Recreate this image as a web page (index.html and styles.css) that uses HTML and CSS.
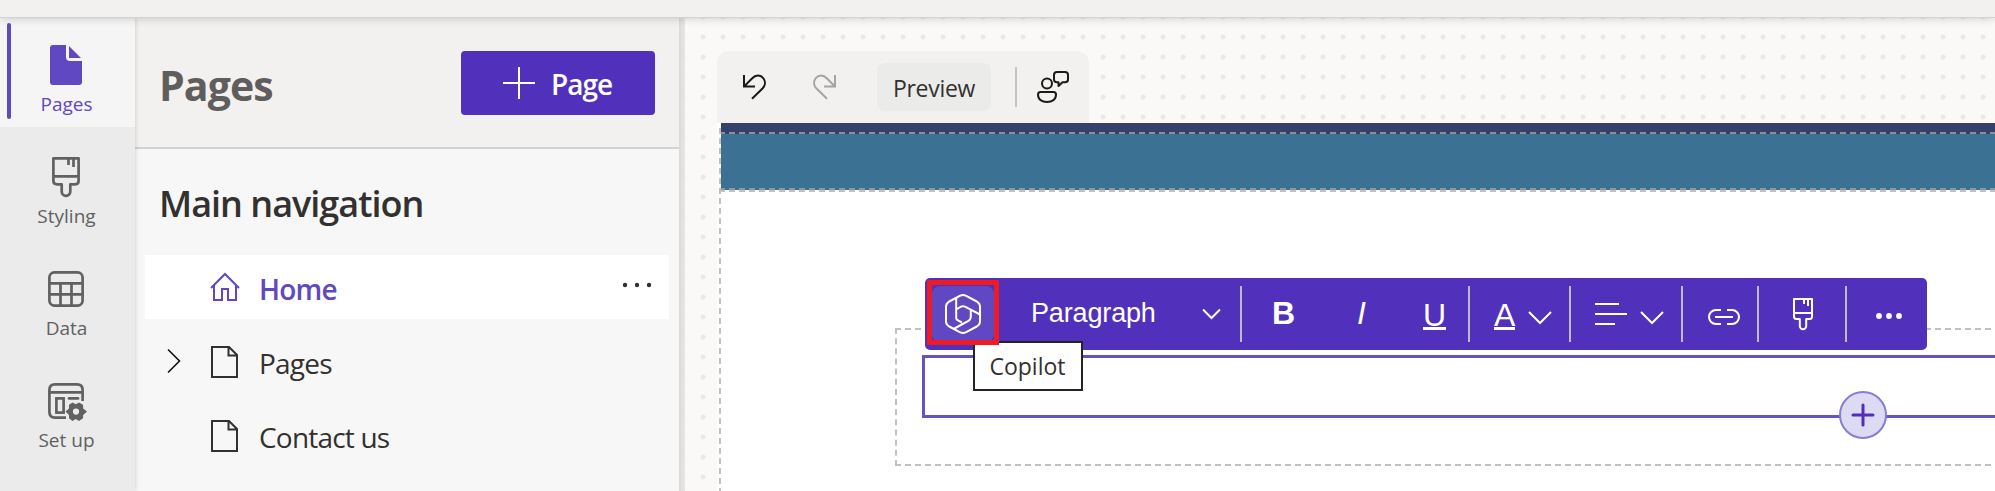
FILE: index.html
```html
<!DOCTYPE html>
<html lang="en">
<head>
<meta charset="utf-8">
<title>Pages</title>
<link rel="stylesheet" href="styles.css">
</head>
<body>
<div class="app">
  <header class="topbar"></header>
  <div class="workspace">
    <nav class="rail">
      <a class="rail-item active">
        <svg class="rail-icon" width="40" height="40" viewBox="0 0 40 40"><path fill="#6048c3" d="M7 0H20V12Q20 16 24 16H36V37Q36 40 33 40H7Q4 40 4 37V3Q4 0 7 0ZM23 1V13H35Z"/></svg>
        <span class="rail-label pages-label">Pages</span>
      </a>
      <a class="rail-item">
        <svg class="rail-icon" width="40" height="40" viewBox="0 0 40 40" fill="none" stroke="#616161" stroke-width="2.7" stroke-linejoin="round"><path d="M7.4 1.4H32.6V24Q32.6 27.3 29 27.3H24.3V34.5A4.3 4.3 0 0 1 15.700 34.5V27.3H11Q7.400 27.3 7.4 24ZM7.4 19.4H32.6M22.500 2V8M27.500 2V10"/></svg>
        <span class="rail-label">Styling</span>
      </a>
      <a class="rail-item">
        <svg class="rail-icon" width="40" height="40" viewBox="0 0 40 40" fill="none" stroke="#616161" stroke-width="2.7"><rect x="3.4" y="3.4" width="33.2" height="33.2" rx="5"/><path d="M3 14.400H37M3 25.400H37M14.500 14V37M25.500 14V37"/></svg>
        <span class="rail-label">Data</span>
      </a>
      <a class="rail-item">
        <svg class="rail-icon" width="40" height="40" viewBox="0 0 40 40" fill="none" stroke="#616161" stroke-width="2.700"><path d="M20 36.600H9Q3.400 36.600 3.400 31V9Q3.400 3.400 9 3.400H31Q36.600 3.400 36.600 9V20M3.400 11.400H36.600"/><rect x="10.400" y="17.400" width="7.200" height="14.200"/><path d="M23 17.400H32" stroke-linecap="round"/><g fill="#616161" stroke="none"><path fill-rule="evenodd" d="M26.500 21.500L29.800 23.200L33 21.500L37 23.800L37.200 27.400L41 30.500L37.200 34L37 37.300L33 40L29.800 38L26.500 40L23 37.300L23 34L19.500 30.500L23 27.400L23 23.800ZM30 27.500A3 3 0 1 0 30 33.700A3 3 0 1 0 30 27.500Z"/></g></svg>
        <span class="rail-label">Set up</span>
      </a>
    </nav>
    <aside class="panel">
      <div class="panel-head">
        <h1 class="panel-title">Pages</h1>
        <button class="add-page">
          <svg width="32" height="32" viewBox="0 0 32 32" stroke="#fff" stroke-width="2"><path d="M16 0V32M0 16H32"/></svg>
          <span class="add-label">Page</span>
        </button>
      </div>
      <h2 class="section-title">Main navigation</h2>
      <div class="nav-list">
        <div class="nav-row selected">
          <svg class="nav-icon" width="30" height="32" viewBox="0 0 30 32" fill="none" stroke="#6048c3" stroke-width="2"><path d="M1 17L15 3L29 17M4 14.500V29H12V18H18V29H26V14.500"/></svg>
          <span class="nav-label home-label">Home</span>
          <svg class="more" width="30" height="6" viewBox="0 0 30 6" fill="#323130"><circle cx="3" cy="3" r="2.200"/><circle cx="15" cy="3" r="2.200"/><circle cx="27" cy="3" r="2.200"/></svg>
        </div>
        <div class="nav-row">
          <svg class="expander" width="14" height="26" viewBox="0 0 14 26" fill="none" stroke="#111" stroke-width="1.600"><path d="M1 1.500L12.500 13L1 24.500"/></svg>
          <svg class="nav-icon page-icon" width="30" height="32" viewBox="0 0 30 32" fill="none" stroke="#323130" stroke-width="2"><path d="M2 1H19L27 9V31H2ZM18.500 1V9.500H27"/></svg>
          <span class="nav-label">Pages</span>
        </div>
        <div class="nav-row">
          <svg class="nav-icon page-icon" width="30" height="32" viewBox="0 0 30 32" fill="none" stroke="#323130" stroke-width="2"><path d="M2 1H19L27 9V31H2ZM18.500 1V9.500H27"/></svg>
          <span class="nav-label contact-label">Contact us</span>
        </div>
      </div>
    </aside>
    <div class="splitter"></div>
    <main class="canvas">
      <div class="view-bar">
        <svg class="undo" width="24" height="26" viewBox="0 0 24 26" fill="none" stroke="#1b1a19" stroke-width="2"><path d="M2 1V12.400H13M2.500 12L10 4.500C14 .200 19 1 21.500 4.500C24 8 23 12 20.500 14.500L10 24.800"/></svg>
        <svg class="redo" width="24" height="26" viewBox="0 0 24 26" fill="none" stroke="#a5a4a2" stroke-width="2"><path d="M22 1V12.400H11M21.500 12L14 4.500C10 .200 5 1 2.500 4.500C0 8 1 12 3.500 14.500L14 24.800"/></svg>
        <button class="preview"><span class="preview-label">Preview</span></button>
        <span class="bar-sep"></span>
        <svg class="feedback" width="32" height="32" viewBox="0 0 32 32" fill="none" stroke="#1b1a19" stroke-width="2" stroke-linejoin="round"><circle cx="10" cy="12.500" r="5"/><path d="M3.500 21H16.500Q19 21 19 23.500C19 28.500 15 31 10 31S1 28.500 1 23.500Q1 21 3.500 21ZM20 1H28Q31 1 31 4V8.500Q31 11.300 28 11.300H25.500L21.500 15V11.300H20Q17 11.300 17 8.500V4Q17 1 20 1Z"/></svg>
      </div>
      <div class="site">
        <div class="site-strip"></div>
        <div class="site-header"></div>
        <div class="section-frame">
          <svg class="section-outline" width="1100" height="138" viewBox="0 0 1100 138" fill="none" stroke="#c1c1c1" stroke-width="2" stroke-dasharray="6 4"><path d="M0 1H1100M0 137H1100"/><path d="M1 0V138" stroke-dasharray="6 4.150"/></svg>
          <div class="text-block"></div>
          <div class="add-section"><svg width="24" height="24" viewBox="0 0 24 24" stroke="#4f2fba" stroke-width="3" stroke-linecap="round"><path d="M12 2V22M2 12H22"/></svg></div>
          <div class="format-bar">
            <div class="copilot">
              <svg width="36" height="40" viewBox="0 0 36 40" fill="none" stroke="#fff" stroke-width="2" stroke-linejoin="round"><path d="M14.800 1.800Q18 .300 21.200 1.800L31.800 7.500Q35 9.500 35 12.500V27.500Q35 30.500 31.800 32.500L21.200 38.200Q18 39.700 14.800 38.200L4.200 32.500Q1 30.500 1 27.500V12.500Q1 9.500 4.200 7.500Z"/><path d="M11.200 4V24Q11.200 25.500 12.500 26.200L17 28.500M11.200 15.500L16 12.700Q18 11.700 20 12.700L35 20.500M25.800 16V22.500Q25.800 25.500 23 27.200L8.500 35"/></svg>
            </div>
            <div class="cell c-style"><span class="style-label">Paragraph</span><svg width="19" height="12" viewBox="0 0 19 12" fill="none" stroke="#fff" stroke-width="2"><path d="M1 1.500L9.500 10L18 1.500"/></svg></div>
            <div class="cell c-marks"><b class="glyph g-b">B</b><i class="glyph g-i">I</i><span class="glyph g-u">U</span></div>
            <div class="cell c-color"><span class="glyph g-a">A</span><svg width="24" height="14" viewBox="0 0 24 14" fill="none" stroke="#fff" stroke-width="2"><path d="M1 1L12 12L23 1"/></svg></div>
            <div class="cell c-align"><svg width="32" height="24" viewBox="0 0 32 24" fill="none" stroke="#fff" stroke-width="2"><path d="M0 2H24M0 12H32M0 22H20"/></svg><svg class="align-chev" width="24" height="14" viewBox="0 0 24 14" fill="none" stroke="#fff" stroke-width="2"><path d="M1 1L12 12L23 1"/></svg></div>
            <div class="cell c-link"><svg width="32" height="16" viewBox="0 0 32 16" fill="none" stroke="#fff" stroke-width="2"><path d="M13 1H8A7 7 0 0 0 8 15H13M19 1H24A7 7 0 0 1 24 15H19M7 8H25"/></svg></div>
            <div class="cell c-brush"><svg width="20" height="32" viewBox="0 0 20 32" fill="none" stroke="#fff" stroke-width="2" stroke-linejoin="round"><path d="M1 1H19V18.500Q19 21 16.500 21H13.200V28A3.200 3.200 0 0 1 6.800 28V21H3.500Q1 21 1 18.500ZM1 15H19M11 1V6M15 1V8"/></svg></div>
            <div class="cell c-more"><svg width="26" height="6" viewBox="0 0 26 6" fill="#fff"><circle cx="3" cy="3" r="2.900"/><circle cx="13" cy="3" r="2.900"/><circle cx="23" cy="3" r="2.900"/></svg></div>
          </div>
          <div class="tooltip"><span class="tip-label">Copilot</span></div>
          <div class="highlight"></div>
        </div>
      </div>
    </main>
  </div>
</div>
</body>
</html>
```

FILE: styles.css
```css
* { box-sizing: border-box; }
body { margin: 0; font-family: "Open Sans", "Noto Sans", sans-serif; color: #323130; }
h1, h2 { margin: 0; }
button { border: 0; padding: 0; font: inherit; color: inherit; }
svg { display: block; flex: none; overflow: visible; }
span, b, i { white-space: nowrap; }

.app { width: 1995px; height: 491px; overflow: hidden; display: flex; flex-direction: column; }
.topbar { height: 18px; flex: none; background: #f3f1f0; border-bottom: 1px solid #d2d2d3; box-shadow: 0 1px 9px rgba(0,0,0,.17); position: relative; z-index: 5; }
.workspace { flex: 1; display: flex; min-height: 0; }

.rail { width: 135px; flex: none; background: #ebebeb; box-shadow: 0 0 5px rgba(0,0,0,.18); position: relative; z-index: 1; }
.rail-item { height: 112px; display: flex; flex-direction: column; align-items: center; padding: 30px 3px 0 0; color: #616161; font-size: 19px; }
.rail-item.active { height: 109px; padding-top: 27px; background: #f5f5f5; color: #6048c3; position: relative; }
.rail-item.active::before { content: ""; position: absolute; left: 7px; top: 5px; width: 4px; height: 96px; border-radius: 2px; background: #6048c3; }
.rail-label { line-height: 26px; margin: 6px 0 0 1px; }

.panel { width: 544px; flex: none; background: #f7f7f7; }
.panel-head { height: 131px; background: #f3f1f0; border-bottom: 2px solid #d2d2d2; display: flex; justify-content: space-between; align-items: flex-start; padding: 33px 24px 0 24px; }
.panel-title { font-size: 41px; line-height: 64px; font-weight: 700; color: #605e5c; margin-top: 2px; letter-spacing: -.9px; }
.add-page { width: 194px; height: 64px; border-radius: 4px; background: #5131bb; color: #fff; display: flex; align-items: center; padding-left: 42px; font-size: 28px; font-weight: 600; }
.add-label { margin: 2px 0 0 16px; letter-spacing: -1px; }
.section-title { font-size: 36px; line-height: 50px; font-weight: 600; margin: 30px 0 0 24px; white-space: nowrap; letter-spacing: -1px; }
.nav-list { display: flex; flex-direction: column; gap: 10px; padding: 26px 10px 0; }
.nav-row { height: 64px; display: flex; align-items: center; padding-left: 65px; font-size: 28px; letter-spacing: -.8px; }
.nav-row.selected { background: #fff; color: #6048c3; font-weight: 600; }
.nav-label { margin-left: 19px; margin-top: 3px; }
.page-icon { margin-top: 2px; }
.more { margin: 0 17px 4px auto; }
.expander { margin: 0 29px 0 -43px; }

.splitter { width: 6px; flex: none; background: linear-gradient(90deg, #dbdad9, #e9e7e6); }

.canvas { flex: 1; min-width: 0; padding: 33px 0 0 32px; background: #faf9f8 radial-gradient(circle at 10px 10px, #eae9e8 2px, transparent 3px) 8px 9px / 20px 20px; }
.view-bar { width: 372px; height: 72px; background: #f3f1f0; border-radius: 12px 12px 0 0; display: flex; align-items: center; padding-left: 25px; }
.redo { margin-left: 47px; }
.preview { margin-left: 40px; width: 114px; height: 48px; border-radius: 8px; background: #ebebea; font-size: 23px; letter-spacing: -.3px; padding-top: 2px; color: #323130; }
.bar-sep { width: 2px; height: 40px; background: #c4c3c2; margin-left: 24px; }
.feedback { margin-left: 20px; }

.site { height: 400px; background: repeating-linear-gradient(180deg, #c1c1c1 0 6px, transparent 6px 10px) 2px 5px / 2px 100% no-repeat, #fff; padding-left: 4px; }
.site-strip { height: 11px; background: repeating-linear-gradient(90deg, #8d8f9b 0 6px, transparent 6px 10.010px) -2px 9px / 1400px 2px no-repeat, #34416b; }
.site-header { height: 58px; background: repeating-linear-gradient(90deg, #8d979f 0 6px, transparent 6px 10.010px) -2px 54px / 1400px 2px no-repeat, repeating-linear-gradient(90deg, #c1c1c1 0 6px, transparent 6px 10.010px) -2px 56px / 1400px 2px no-repeat, linear-gradient(#3b7193 0 56px, #fff 56px); }

.section-frame { position: relative; margin: 136px 0 0 174px; height: 138px; }
.section-outline { position: absolute; left: 0; top: 0; }
.text-block { position: absolute; left: 27px; top: 27px; width: 1110px; height: 63px; border: 3px solid #6554c0; background: #fff; }
.add-section { position: absolute; left: 944px; top: 63px; width: 48px; height: 48px; border-radius: 50%; border: 2px solid #8b7bd6; background: #dddaf3; display: flex; align-items: center; justify-content: center; padding: 0 1px 1px 0; }
.format-bar { position: absolute; left: 30px; top: -50px; width: 1002px; height: 72px; border-radius: 5px; background: #5131bb; color: #fff; display: flex; align-items: center; font-family: "Liberation Sans", Arial, sans-serif; }
.copilot { margin-left: 7px; width: 62px; height: 56px; border-radius: 8px; background: #6048c3; display: flex; align-items: center; justify-content: center; }
.cell { height: 56px; border-right: 2px solid #c0b9bf; display: flex; align-items: center; flex: none; }
.c-style { width: 248px; justify-content: space-between; padding: 0 19px 0 36px; font-size: 27px; }
.style-label { margin: -1px 0 0 1px; letter-spacing: -.15px; }
.c-marks { width: 228px; }
.c-color { width: 101px; padding-left: 24px; }
.c-align { width: 112px; padding-left: 24px; }
.c-link { width: 76px; padding: 6px 0 0 25px; }
.c-brush { width: 88px; padding-left: 34px; }
.c-more { border: 0; padding: 4px 0 0 29px; }
.align-chev { margin: 8px 0 0 13px; }
.c-color svg { margin: 8px 0 0 13px; }
.glyph { font-size: 32px; line-height: 36px; height: 36px; }
.g-b { margin-left: 30px; margin-top: -2px; }
.g-i { margin-left: 62px; margin-top: -2px; }
.g-u { margin-left: 57px; border-bottom: 3px solid #fff; height: 32px; line-height: 34px; }
.g-a { border-bottom: 3px solid #fff; height: 32px; line-height: 34px; }
.tooltip { position: absolute; left: 78px; top: 13px; width: 110px; height: 50px; border: 2px solid #242424; background: #fff; display: flex; align-items: center; justify-content: center; font-size: 23px; padding-right: 1px; }
.highlight { position: absolute; left: 32px; top: -48px; width: 72px; height: 65px; border: 5px solid #ed1c24; }
```
